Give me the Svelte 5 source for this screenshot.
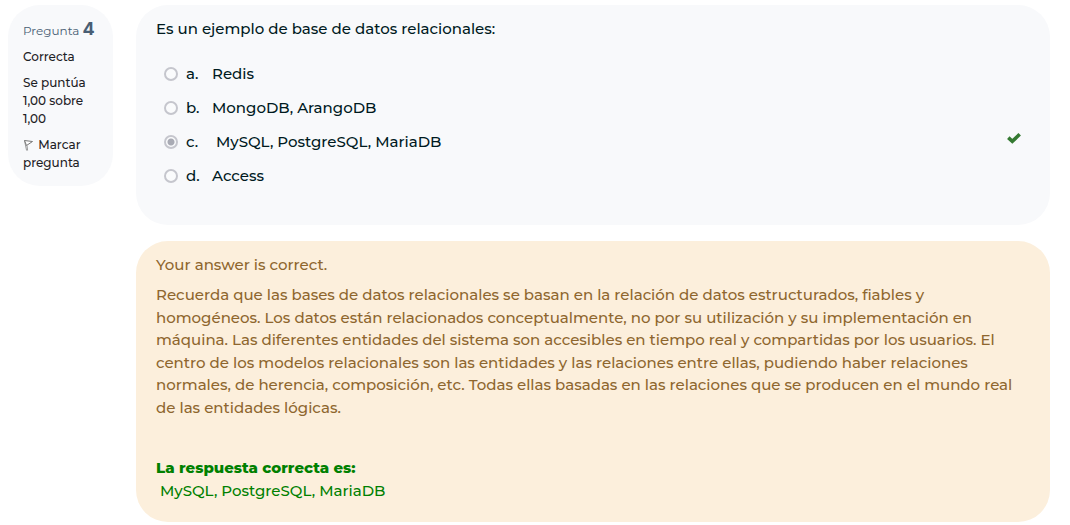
<script lang="ts">
  const options = [
    { key: 'a', text: 'Redis' },
    { key: 'b', text: 'MongoDB, ArangoDB' },
    { key: 'c', text: '\u00a0MySQL, PostgreSQL, MariaDB' },
    { key: 'd', text: 'Access' }
  ];
  const chosen = 'c';
</script>

<main class="question">
  <aside class="info">
    <h3>Pregunta <span class="number">4</span></h3>
    <div class="state">Correcta</div>
    <div class="grade">Se puntúa 1,00 sobre 1,00</div>
    <a class="flag" href="#flag">
      <svg width="12" height="12" viewBox="0 0 12 12" aria-hidden="true">
        <path d="M1.5 1.5 3.6 11.5M4.6 11.5 4 6.5" fill="none" stroke="#999" stroke-width="1" />
        <path d="M1.5 1.5 9.5 2.5 3.5 6.5Z" fill="#fff" stroke="#777" stroke-width="1" stroke-linejoin="round" />
      </svg>
      Marcar pregunta
    </a>
  </aside>

  <div class="content">
    <section class="card formulation">
      <p id="prompt">Es un ejemplo de base de datos relacionales:</p>
      <div class="answers" role="radiogroup" aria-labelledby="prompt">
        {#each options as option}
          <div class="answer">
            <input type="radio" name="answer" id="answer-{option.key}" checked={option.key === chosen} disabled />
            <label for="answer-{option.key}">
              <span class="key">{option.key}.</span>
              <span>{option.text}</span>
            </label>
            {#if option.key === chosen}
              <svg class="check" width="16" height="12" viewBox="0 0 16 12" aria-hidden="true">
                <path d="M2.3 5.6 6.3 9.3 13.7 2.3" fill="none" stroke="#357a32" stroke-width="3.6" />
              </svg>
            {/if}
          </div>
        {/each}
      </div>
    </section>

    <section class="card feedback">
      <p>Your answer is correct.</p>
      <p class="general">
        Recuerda que las bases de datos relacionales se basan en la relación de datos estructurados, fiables y<br />
        homogéneos. Los datos están relacionados conceptualmente, no por su utilización y su implementación en<br />
        máquina. Las diferentes entidades del sistema son accesibles en tiempo real y compartidas por los usuarios. El<br />
        centro de los modelos relacionales son las entidades y las relaciones entre ellas, pudiendo haber relaciones<br />
        normales, de herencia, composición, etc. Todas ellas basadas en las relaciones que se producen en el mundo real<br />
        de las entidades lógicas.
      </p>
      <div class="right"><strong>La respuesta correcta es:</strong><br />&nbsp;MySQL, PostgreSQL, MariaDB</div>
    </section>
  </div>
</main>

<style>
  :global(body) {
    background: #fff;
  }
  .question {
    display: grid;
    grid-template-columns: 105px minmax(0, 1fr);
    gap: 23px;
    align-items: start;
    padding: 5px 20px 4px 8px;
    font: 500 15px/22px Montserrat, Inter, sans-serif;
    color: #001a1e;
  }
  h3,
  p {
    margin: 0;
  }
  .info {
    display: flex;
    flex-direction: column;
    gap: 8px;
    padding: 15px 12px 14px 15px;
    border-radius: 32px;
    background: #f8f9fb;
    font-size: 12px;
    line-height: 18px;
    color: #1d2125;
  }
  h3 {
    font-size: 12px;
    font-weight: 400;
    line-height: 18px;
    color: #495e74;
    white-space: nowrap;
  }
  .number {
    font-family: Inter, sans-serif;
    font-size: 18px;
    font-weight: 700;
    line-height: 18px;
  }
  .flag {
    color: inherit;
    text-decoration: none;
  }
  .flag svg {
    vertical-align: -2px;
  }
  .content {
    display: grid;
    gap: 16px;
  }
  .card {
    padding: 13px 20px;
    border-radius: 32px;
  }
  .formulation {
    padding-bottom: 32px;
    background: #f8f9fb;
  }
  .answers {
    padding: 17px 8px 0;
  }
  .answer {
    display: flex;
    align-items: center;
    height: 34px;
  }
  input {
    appearance: none;
    box-sizing: border-box;
    width: 14px;
    height: 14px;
    margin: 0 8px 0 0;
    border: 2px solid #c5c6cd;
    border-radius: 50%;
    background: #fafbfc;
  }
  input:checked {
    background: radial-gradient(circle, #a9abb4 0 3px, #fafbfc 4px);
  }
  label {
    display: flex;
  }
  .key {
    width: 26px;
  }
  .check {
    margin-left: auto;
    position: relative;
    top: -4px;
  }
  .feedback {
    padding-bottom: 20px;
    background: #fcefdc;
    color: #8e662e;
  }
  .general {
    margin-top: 8px;
    line-height: 1.5;
  }
  .right {
    margin-top: 37px;
    line-height: 23px;
    color: #008000;
  }
  strong {
    font-weight: 800;
  }
</style>
